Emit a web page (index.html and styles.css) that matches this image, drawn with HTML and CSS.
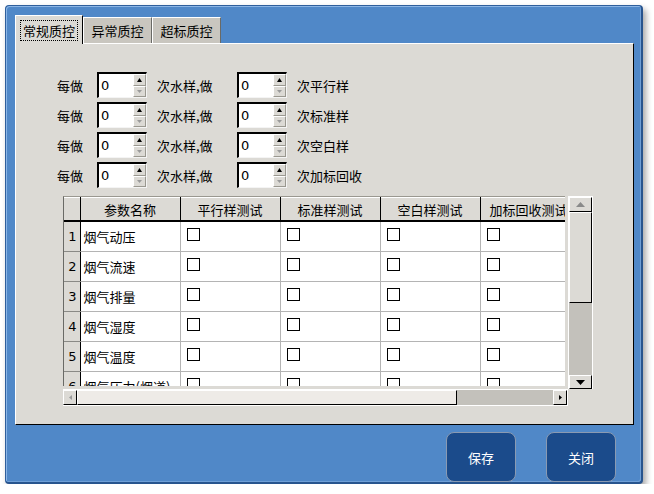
FILE: index.html
```html
<!DOCTYPE html>
<html>
<head>
<meta charset="utf-8">
<link rel="stylesheet" href="styles.css">
</head>
<body>
<div class="window">
  <div class="tabbar">
    <div class="tab tab-active"><span class="focus">常规质控</span></div>
    <div class="tab">异常质控</div>
    <div class="tab">超标质控</div>
  </div>
  <div class="pane">
    <div class="spin-rows">
      <div class="spin-row">
        <span class="lbl lbl1">每做</span>
        <div class="spin"><span class="spin-val">0</span><div class="spin-btns"><div class="sb sb-up"><svg width="5" height="4" viewBox="0 0 5 4"><path d="M2.5 0L5 4H0Z" fill="#000"/></svg></div><div class="sb sb-down"><svg width="5" height="3" viewBox="0 0 5 3"><path d="M0 0H5L2.5 3Z" fill="#9a9a9a"/></svg></div></div></div>
        <span class="lbl lbl2">次水样,做</span>
        <div class="spin"><span class="spin-val">0</span><div class="spin-btns"><div class="sb sb-up"><svg width="5" height="4" viewBox="0 0 5 4"><path d="M2.5 0L5 4H0Z" fill="#000"/></svg></div><div class="sb sb-down"><svg width="5" height="3" viewBox="0 0 5 3"><path d="M0 0H5L2.5 3Z" fill="#9a9a9a"/></svg></div></div></div>
        <span class="lbl lbl3">次平行样</span>
      </div>
      <div class="spin-row">
        <span class="lbl lbl1">每做</span>
        <div class="spin"><span class="spin-val">0</span><div class="spin-btns"><div class="sb sb-up"><svg width="5" height="4" viewBox="0 0 5 4"><path d="M2.5 0L5 4H0Z" fill="#000"/></svg></div><div class="sb sb-down"><svg width="5" height="3" viewBox="0 0 5 3"><path d="M0 0H5L2.5 3Z" fill="#9a9a9a"/></svg></div></div></div>
        <span class="lbl lbl2">次水样,做</span>
        <div class="spin"><span class="spin-val">0</span><div class="spin-btns"><div class="sb sb-up"><svg width="5" height="4" viewBox="0 0 5 4"><path d="M2.5 0L5 4H0Z" fill="#000"/></svg></div><div class="sb sb-down"><svg width="5" height="3" viewBox="0 0 5 3"><path d="M0 0H5L2.5 3Z" fill="#9a9a9a"/></svg></div></div></div>
        <span class="lbl lbl3">次标准样</span>
      </div>
      <div class="spin-row">
        <span class="lbl lbl1">每做</span>
        <div class="spin"><span class="spin-val">0</span><div class="spin-btns"><div class="sb sb-up"><svg width="5" height="4" viewBox="0 0 5 4"><path d="M2.5 0L5 4H0Z" fill="#000"/></svg></div><div class="sb sb-down"><svg width="5" height="3" viewBox="0 0 5 3"><path d="M0 0H5L2.5 3Z" fill="#9a9a9a"/></svg></div></div></div>
        <span class="lbl lbl2">次水样,做</span>
        <div class="spin"><span class="spin-val">0</span><div class="spin-btns"><div class="sb sb-up"><svg width="5" height="4" viewBox="0 0 5 4"><path d="M2.5 0L5 4H0Z" fill="#000"/></svg></div><div class="sb sb-down"><svg width="5" height="3" viewBox="0 0 5 3"><path d="M0 0H5L2.5 3Z" fill="#9a9a9a"/></svg></div></div></div>
        <span class="lbl lbl3">次空白样</span>
      </div>
      <div class="spin-row">
        <span class="lbl lbl1">每做</span>
        <div class="spin"><span class="spin-val">0</span><div class="spin-btns"><div class="sb sb-up"><svg width="5" height="4" viewBox="0 0 5 4"><path d="M2.5 0L5 4H0Z" fill="#000"/></svg></div><div class="sb sb-down"><svg width="5" height="3" viewBox="0 0 5 3"><path d="M0 0H5L2.5 3Z" fill="#9a9a9a"/></svg></div></div></div>
        <span class="lbl lbl2">次水样,做</span>
        <div class="spin"><span class="spin-val">0</span><div class="spin-btns"><div class="sb sb-up"><svg width="5" height="4" viewBox="0 0 5 4"><path d="M2.5 0L5 4H0Z" fill="#000"/></svg></div><div class="sb sb-down"><svg width="5" height="3" viewBox="0 0 5 3"><path d="M0 0H5L2.5 3Z" fill="#9a9a9a"/></svg></div></div></div>
        <span class="lbl lbl3">次加标回收</span>
      </div>
    </div>

    <div class="grid-frame">
      <div class="viewport">
        <table class="tbl">
          <colgroup><col class="c-num"><col class="c-w"><col class="c-w"><col class="c-w"><col class="c-w"><col class="c-w"></colgroup>
          <thead>
            <tr><th class="corner"></th><th>参数名称</th><th>平行样测试</th><th>标准样测试</th><th>空白样测试</th><th class="cut">加标回收测试</th></tr>
          </thead>
          <tbody>
            <tr><td class="rn">1</td><td class="nm">烟气动压</td><td><i class="cb"></i></td><td><i class="cb"></i></td><td><i class="cb"></i></td><td><i class="cb"></i></td></tr>
            <tr><td class="rn">2</td><td class="nm">烟气流速</td><td><i class="cb"></i></td><td><i class="cb"></i></td><td><i class="cb"></i></td><td><i class="cb"></i></td></tr>
            <tr><td class="rn">3</td><td class="nm">烟气排量</td><td><i class="cb"></i></td><td><i class="cb"></i></td><td><i class="cb"></i></td><td><i class="cb"></i></td></tr>
            <tr><td class="rn">4</td><td class="nm">烟气湿度</td><td><i class="cb"></i></td><td><i class="cb"></i></td><td><i class="cb"></i></td><td><i class="cb"></i></td></tr>
            <tr><td class="rn">5</td><td class="nm">烟气温度</td><td><i class="cb"></i></td><td><i class="cb"></i></td><td><i class="cb"></i></td><td><i class="cb"></i></td></tr>
            <tr><td class="rn">6</td><td class="nm">烟气压力(烟道)</td><td><i class="cb"></i></td><td><i class="cb"></i></td><td><i class="cb"></i></td><td><i class="cb"></i></td></tr>
          </tbody>
        </table>
      </div>
      <div class="vscroll">
        <div class="sbtn sbtn-v"><svg width="9" height="5" viewBox="0 0 9 5"><path d="M4.5 0L9 5H0Z" fill="#8a8a8a"/></svg></div>
        <div class="vthumb"></div>
        <div class="vtrack"></div>
        <div class="sbtn sbtn-v sbtn-vd"><svg width="9" height="5" viewBox="0 0 9 5"><path d="M0 0H9L4.5 5Z" fill="#000"/></svg></div>
      </div>
      <div class="hscroll">
        <div class="sbtn sbtn-h"><svg width="3" height="5" viewBox="0 0 3 5"><path d="M0 2.5L3 0V5Z" fill="#9a9a9a"/></svg></div>
        <div class="hthumb"></div>
        <div class="htrack"></div>
        <div class="sbtn sbtn-h"><svg width="3" height="5" viewBox="0 0 3 5"><path d="M3 2.5L0 0V5Z" fill="#000"/></svg></div>
      </div>
      <div class="corner-box"></div>
    </div>
  </div>
  <div class="actions">
    <button class="btn">保存</button>
    <button class="btn">关闭</button>
  </div>
</div>
</body>
</html>
```

FILE: styles.css
```css
html, body {
  margin: 0;
  padding: 0;
  background: #ffffff;
}
body {
  font-family: "Noto Sans CJK SC", "DejaVu Sans", sans-serif;
  font-size: 13px;
  color: #000;
}
.window {
  margin: 5px 0 0 5px;
  width: 638px;
  height: 479px;
  box-sizing: border-box;
  background: #5088c8;
  border: 1px solid #2f5f9c;
  border-right: 2px solid #27548e;
  border-bottom: 2px solid #27548e;
  border-radius: 4px;
  box-shadow: inset 1px 1px 0 #8cb6e6, inset -1px -1px 0 #6f9fd6, 3px 4px 6px rgba(0,0,0,0.35);
  padding: 9px 7px 0 9px;
  display: flex;
  flex-direction: column;
}
.tabbar {
  height: 28px;
  display: flex;
  align-items: flex-end;
  position: relative;
  z-index: 2;
}
.tab {
  box-sizing: border-box;
  width: 69px;
  height: 26px;
  background: #c9c6bf;
  border-top: 1px solid #ffffff;
  border-left: 1px solid #ffffff;
  border-right: 1px solid #6a6a66;
  display: flex;
  align-items: center;
  justify-content: center;
  line-height: 1;
}
.tab-active {
  width: 68px;
  height: 29px;
  margin-bottom: -1px;
  background: #dcdad5;
  border-right: 1px solid #000;
}
.focus {
  border: 1px dotted #000;
  padding: 3px 2px;
}
.pane {
  box-sizing: border-box;
  height: 382px;
  background: #dcdad5;
  border-top: 1px solid #ffffff;
  border-left: 1px solid #ffffff;
  border-right: 1px solid #000;
  border-bottom: 1px solid #000;
  padding: 28px 0 0 41px;
  position: relative;
  z-index: 1;
}
.spin-rows {
  display: flex;
  flex-direction: column;
  gap: 4px;
}
.spin-row {
  height: 26px;
  display: flex;
  align-items: center;
}
.lbl {
  white-space: nowrap;
}
.lbl1 { width: 40px; }
.lbl2 { width: 80px; margin-left: 10px; }
.lbl3 { margin-left: 10px; }
.spin {
  box-sizing: border-box;
  width: 50px;
  height: 26px;
  display: flex;
  background: #fff;
  border-top: 2px solid #000;
  border-left: 2px solid #000;
  border-right: 1px solid #f4f4f4;
  border-bottom: 1px solid #f4f4f4;
}
.spin-val {
  flex: 1;
  font-family: "DejaVu Sans", sans-serif;
  font-size: 13px;
  line-height: 23px;
  padding-left: 2px;
}
.spin-btns {
  width: 13px;
  display: flex;
  flex-direction: column;
  background: #dcdad5;
}
.sb {
  flex: 1;
  box-sizing: border-box;
  display: flex;
  align-items: center;
  justify-content: center;
  border-left: 1px solid #fff;
  border-top: 1px solid #fff;
  border-right: 1px solid #9a9890;
  border-bottom: 1px solid #9a9890;
}
.grid-frame {
  margin: 8px 0 0 6px;
  width: 530px;
  height: 210px;
  display: grid;
  grid-template-columns: 505px 25px;
  grid-template-rows: 193px 17px;
}
.viewport {
  box-sizing: border-box;
  width: 502px;
  height: 190px;
  overflow: hidden;
  background: #fff;
  border-top: 1px solid #9a9890;
  border-left: 1px solid #6a6a66;
}
.tbl {
  table-layout: fixed;
  width: 516px;
  border-collapse: collapse;
  border-spacing: 0;
}
.c-num { width: 16px; }
.c-w { width: 100px; }
.tbl th {
  height: 22px;
  padding: 0;
  background: #dcdad5;
  font-weight: normal;
  text-align: center;
  border-right: 1px solid #000;
  border-bottom: 2px solid #000;
  border-top: 1px solid #fff;
  white-space: nowrap;
  overflow: hidden;
  line-height: 1;
}
.tbl th.cut {
  text-align: left;
  padding-left: 9px;
  border-right: none;
}
.tbl td {
  height: 29px;
  padding: 0;
  border-right: 1px solid #b4b4b4;
  border-bottom: 1px solid #b4b4b4;
  vertical-align: top;
  white-space: nowrap;
  overflow: hidden;
}
.tbl td.rn {
  background: #dcdad5;
  border-right: 1px solid #000;
  border-bottom: 1px solid #8a8a86;
  text-align: right;
  padding-right: 3px;
  font-family: "DejaVu Sans", sans-serif;
  font-size: 13px;
  line-height: 29px;
  vertical-align: middle;
}
.tbl td.nm {
  padding-left: 3px;
  line-height: 29px;
  vertical-align: middle;
}
.cb {
  display: block;
  box-sizing: border-box;
  width: 13px;
  height: 13px;
  margin: 6px 0 0 6px;
  border: 1px solid #000;
  background: #fff;
}
.vscroll {
  grid-column: 2;
  grid-row: 1;
  box-sizing: border-box;
  width: 25px;
  height: 193px;
  display: flex;
  flex-direction: column;
  background: #c3c1bb;
  border-left: 1px solid #fff;
  border-top: 1px solid #fff;
  border-right: 1px solid #fff;
}
.sbtn {
  box-sizing: border-box;
  background: #dcdad5;
  display: flex;
  align-items: center;
  justify-content: center;
  border-top: 1px solid #fff;
  border-left: 1px solid #fff;
  border-right: 1px solid #000;
  border-bottom: 1px solid #000;
}
.sbtn-v {
  height: 15px;
}
.sbtn-vd {
  height: 14px;
}
.vthumb {
  box-sizing: border-box;
  height: 91px;
  background: #dcdad5;
  border-top: 1px solid #fff;
  border-left: 1px solid #fff;
  border-right: 1px solid #000;
  border-bottom: 1px solid #000;
}
.vtrack {
  flex: 1;
}
.hscroll {
  grid-column: 1;
  grid-row: 2;
  box-sizing: border-box;
  width: 505px;
  height: 17px;
  display: flex;
  background: #c3c1bb;
  border-top: 1px solid #fff;
  border-right: 1px solid #fff;
  border-bottom: 1px solid #fff;
}
.sbtn-h {
  width: 14px;
}
.hthumb {
  box-sizing: border-box;
  width: 380px;
  background: #eeebe7;
  border-top: 1px solid #fff;
  border-left: 1px solid #fff;
  border-right: 1px solid #000;
  border-bottom: 1px solid #000;
}
.htrack {
  flex: 1;
}
.corner-box {
  grid-column: 2;
  grid-row: 2;
}
.actions {
  display: flex;
  justify-content: flex-end;
  gap: 30px;
  padding: 7px 18px 0 0;
}
.btn {
  box-sizing: border-box;
  width: 70px;
  height: 50px;
  background: #1b4b8b;
  border: 1px solid #8a9ab2;
  border-radius: 8px;
  color: #fff;
  font-family: "Noto Sans CJK SC", "DejaVu Sans", sans-serif;
  font-size: 13px;
  padding: 0;
}
```
